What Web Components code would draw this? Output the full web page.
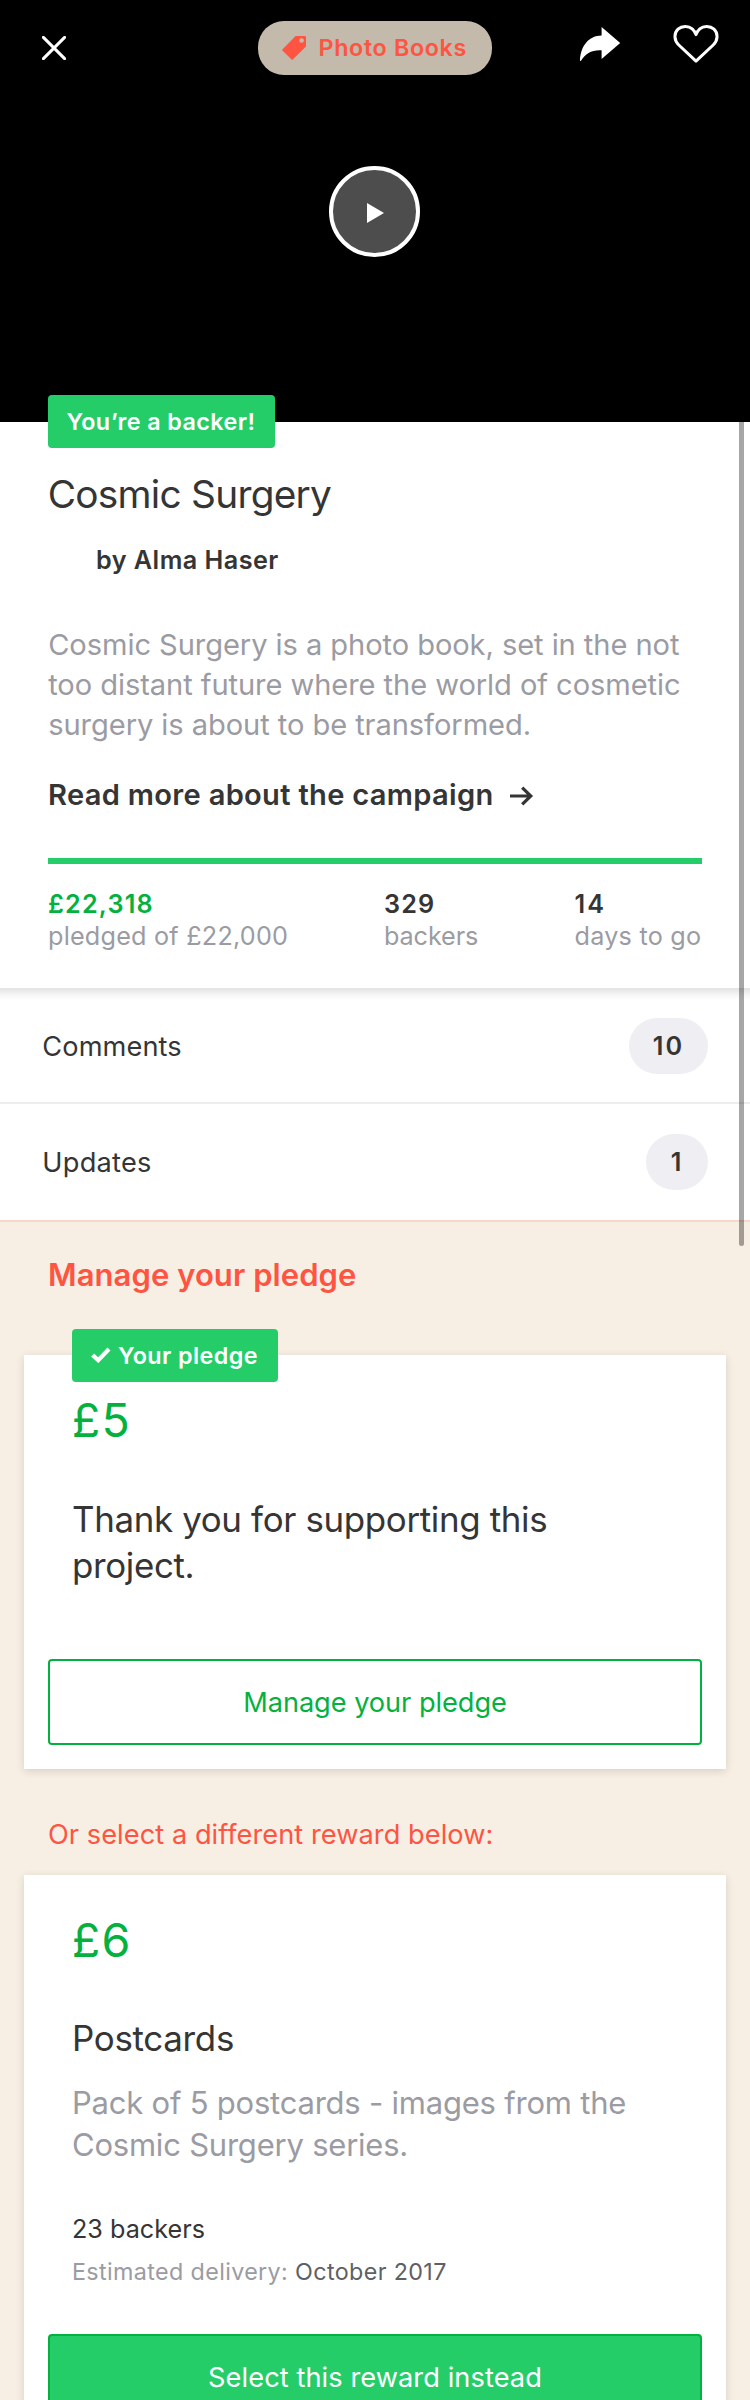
<!DOCTYPE html>
<html lang="en">
<head>
<meta charset="utf-8">
<title>Cosmic Surgery</title>
<style>
html,body{margin:0;padding:0}
body{width:750px;height:2400px;overflow:hidden;background:#f7efe4;font-family:Inter,"Liberation Sans",sans-serif;color:#353535}
</style>
</head>
<body>
<project-page></project-page>
<script>
const define = (name, html) => {
  const tpl = document.createElement("template");
  tpl.innerHTML = html;
  customElements.define(name, class extends HTMLElement {
    constructor() {
      super();
      this.attachShadow({mode: "open"}).append(tpl.content.cloneNode(true));
    }
  });
};

define("category-pill", `
<style>
:host{display:flex;align-items:center;box-sizing:border-box;width:234px;height:54px;border-radius:26px;background:#c3baab;color:#ff5442;padding-left:24px;font-size:23.3px;font-weight:600;letter-spacing:.65px;white-space:nowrap}
svg{display:block;margin-right:12.5px}
span{display:block;line-height:54px}
</style>
<svg width="24" height="24" viewBox="0 0 24 24"><path fill="#ff5442" fill-rule="evenodd" d="M13.6 0H22.6Q24 0 24 1.4V10.4L10.8 23.6Q10.2 24.2 9.6 23.6L.4 14.6Q-.2 14 .4 13.4ZM19.6 2.2a2.3 2.3 0 1 0 .01 0Z"/></svg>
<span><slot></slot></span>`);

define("play-button", `
<style>
:host{display:grid;place-items:center;box-sizing:border-box;width:91px;height:91px;border:4px solid #fff;border-radius:50%;background:#4d4d4d}
svg{display:block;margin:3px 0 0 1px}
</style>
<svg width="17" height="20" viewBox="0 0 17 20"><path fill="#fff" d="M0 0L17 10L0 20Z"/></svg>`);

define("video-hero", `
<style>
:host{display:block;height:422px;background:#000}
header{display:grid;grid-template-columns:258px 234px 88px 93px 77px;height:75px;align-items:start}
svg{display:block}
.close{margin:36px 0 0 42px}
.share{margin-top:26px}
.heart{margin-top:24px}
category-pill{margin-top:21px}
play-button{margin:91px 0 0 329px}
</style>
<header>
<svg class="close" width="24" height="24" viewBox="0 0 24 24"><path d="M1.4 1.4L22.6 22.6M22.6 1.4L1.4 22.6" stroke="#fff" stroke-width="3" stroke-linecap="round"/></svg>
<category-pill><slot></slot></category-pill>
<span></span>
<svg class="share" width="41" height="36" viewBox="0 0 41 36"><path fill="#fff" d="M21.6 1L40.2 17L21.6 33V24.2C11.5 23.6 5.5 27.5 1.2 34.6C.6 35.4-.1 35 0 34.2C.6 20.6 8.6 9.6 21.6 9.6Z"/></svg>
<svg class="heart" width="46" height="40" viewBox="0 0 46 40"><path fill="none" stroke="#fff" stroke-width="3" stroke-linejoin="round" d="M23 37.2L5.8 21C1 16.4.6 9.4 5 5.2C9 1.6 15.4 1.6 19.2 4.8C21 6.4 22.4 8.2 23 10.6C23.6 8.2 25 6.4 26.8 4.8C30.6 1.6 37 1.6 41 5.2C45.4 9.4 45 16.4 40.2 21Z"/></svg>
</header>
<play-button></play-button>`);

define("status-badge", `
<style>
:host{display:flex;align-items:center;box-sizing:border-box;width:227px;height:53px;padding-left:18.5px;border-radius:4px;background:#25cd69;color:#fff;font-size:23.3px;font-weight:600;letter-spacing:.43px;line-height:53px;white-space:nowrap;position:relative}
:host([checked]){width:206px}
svg{display:none;margin:-1px 7.5px 0 0}
:host([checked]) svg{display:block}
</style>
<svg width="20" height="16" viewBox="0 0 20 16"><path d="M1.6 8L7.2 13.2L18 2" fill="none" stroke="#fff" stroke-width="4.2"/></svg>
<span><slot></slot></span>`);

define("stat-item", `
<style>
:host{display:block;font-size:25.2px;line-height:32px;color:#9b9ba3;white-space:nowrap;letter-spacing:var(--sub,0)}
b{display:block;font-weight:600;letter-spacing:var(--top,1.2px);color:var(--tone,#353535)}
</style>
<b><slot name="value"></slot></b><slot></slot>`);

define("project-info", `
<style>
:host{display:block;background:#fff;height:566px;padding:0 48px;box-sizing:border-box}
:host::before{content:"";display:table}
status-badge{margin-top:-27px}
h1{margin:22px 0 0 -.3px;font-size:38.8px;line-height:48px;font-weight:400;letter-spacing:-.74px}
.by{margin:26px 0 0;padding-left:48px;font-size:25.2px;line-height:32px;font-weight:600;letter-spacing:.46px}
.blurb{margin:49px 0 0 .2px;font-size:29.1px;line-height:40px;letter-spacing:-.075px;color:#9b9ba3;white-space:nowrap}
.more{display:flex;align-items:center;margin-top:30px;font-size:29.1px;line-height:40px;font-weight:600;letter-spacing:.3px}
.more svg{margin:1px 0 0 16px}
.bar{height:6px;margin-top:43px;background:#25cd69}
.stats{display:grid;grid-template-columns:336px 190.5px auto;margin-top:24px}
</style>
<status-badge><slot name="badge"></slot></status-badge>
<h1><slot name="title"></slot></h1>
<div class="by"><slot name="author"></slot></div>
<div class="blurb"><slot name="blurb"></slot></div>
<div class="more"><slot name="more"></slot><svg width="24" height="20" viewBox="0 0 24 20"><path d="M0 10H20.5M12.2 1.6L20.8 10L12.2 18.4" fill="none" stroke="#353535" stroke-width="3.2"/></svg></div>
<div class="bar"></div>
<div class="stats"><slot name="stat"></slot></div>`);

define("link-row", `
<style>
:host{display:flex;justify-content:space-between;align-items:flex-start;box-sizing:border-box;height:116px;padding:30px 42px 0 42.3px;background:#fff;border-bottom:2px solid #ededed;line-height:56px;font-size:27.2px;letter-spacing:var(--track,.1px)}
:host([first]){background:linear-gradient(#e2e2e2,#f4f4f4 6px,#fff 12px)}
:host([last]){border-bottom-color:#fff}
.label{line-height:58px}
b{display:block;box-sizing:border-box;height:56px;min-width:62px;padding:0 25px 0 23px;border-radius:28px;background:#efeef3;font-weight:600;font-size:25.2px;text-align:center;letter-spacing:0}
:host([first]) b{width:79px;letter-spacing:2px;padding:0 23px}
</style>
<span class="label"><slot></slot></span><b><slot name="count"></slot></b>`);

define("action-button", `
<style>
:host{display:block;box-sizing:border-box;height:86px;border:2px solid #05b13e;border-radius:4px;color:#05b13e;text-align:center;font-size:27.2px;line-height:84px;letter-spacing:-.05px}
:host([filled]){background:#25cd69;color:#fff;letter-spacing:.08px}
</style>
<slot></slot>`);

define("reward-card", `
<style>
:host{display:block;box-sizing:border-box;margin:0 24px;padding:0 24px 24px;background:#fff;box-shadow:0 2px 8px rgba(0,0,0,.14)}
:host::before{content:"";display:table}
.in{padding:0 24px}
.price{margin:var(--pt,37px) 0 0 -.2px;font-size:46.6px;line-height:56px;color:#05b13e;letter-spacing:1.2px}
.name{margin:var(--nt,47px) 0 0;font-size:34.9px;line-height:46px;letter-spacing:var(--nl,-.3px);white-space:nowrap}
</style>
<div class="in"><slot name="badge"></slot><div class="price"><slot name="price"></slot></div><div class="name"><slot name="name"></slot></div><slot name="detail"></slot></div>
<slot name="action"></slot>`);

define("reward-detail", `
<style>
:host{display:block;white-space:nowrap;color:#9b9ba3}
.d{margin-top:21px;font-size:31px;line-height:42px;letter-spacing:-.22px}
.b{margin:47px 0 0;font-size:25.2px;line-height:32px;color:#353535}
.e{margin:11px 0 0;font-size:23.3px;line-height:32px;letter-spacing:.37px}
.e b{font-weight:400;color:#5f5f66}
</style>
<div class="d"><slot></slot></div><div class="b"><slot name="backers"></slot></div><div class="e"><slot name="label"></slot> <b><slot name="date"></slot></b></div>`);

define("project-page", `
<style>
:host{display:block;position:relative;width:750px;height:2400px;overflow:hidden}
.pledge{border-top:2px solid #f9d7ca;background:#f8efe4;padding-top:33px}
h2{margin:0 0 60px 48px;font-size:31px;line-height:40px;font-weight:600;color:#ff5442;letter-spacing:.07px}
h3{margin:46px 0 20px 48px;font-size:27.2px;line-height:40px;font-weight:400;color:#ff5442;letter-spacing:.05px}
.mine{--pt:10px;--nt:48px;--nl:-.35px}
.mine status-badge{margin-top:-26px}
.mine action-button{margin-top:71px}
.other action-button{margin-top:46px}
.scroll{position:absolute;left:739px;top:200px;width:5px;height:1046px;border-radius:2.5px;background:rgba(0,0,0,.35)}
</style>
<video-hero>Photo Books</video-hero>
<project-info>
<span slot="badge">You’re a backer!</span>
<span slot="title">Cosmic Surgery</span>
<span slot="author">by Alma Haser</span>
<span slot="blurb">Cosmic Surgery is a photo book, set in the not<br>too distant future where the world of cosmetic<br>surgery is about to be transformed.</span>
<span slot="more">Read more about the campaign</span>
<stat-item slot="stat" style="--tone:#05b13e;--sub:.22px"><span slot="value">£22,318</span>pledged of £22,000</stat-item>
<stat-item slot="stat" style="--sub:-.1px"><span slot="value">329</span>backers</stat-item>
<stat-item slot="stat" style="--sub:.24px;--top:2px"><span slot="value">14</span>days to go</stat-item>
</project-info>
<link-row first>Comments<span slot="count">10</span></link-row>
<link-row last style="--track:.25px">Updates<span slot="count">1</span></link-row>
<section class="pledge">
<h2>Manage your pledge</h2>
<reward-card class="mine">
<status-badge slot="badge" checked>Your pledge</status-badge>
<span slot="price">£5</span>
<span slot="name">Thank you for supporting this<br>project.</span>
<action-button slot="action">Manage your pledge</action-button>
</reward-card>
<h3>Or select a different reward below:</h3>
<reward-card class="other">
<span slot="price">£6</span>
<span slot="name">Postcards</span>
<reward-detail slot="detail">Pack of 5 postcards - images from the<br>Cosmic Surgery series.<span slot="backers">23 backers</span><span slot="label">Estimated delivery:</span><span slot="date">October 2017</span></reward-detail>
<action-button slot="action" filled>Select this reward instead</action-button>
</reward-card>
</section>
<div class="scroll"></div>`);
</script>
</body>
</html>
